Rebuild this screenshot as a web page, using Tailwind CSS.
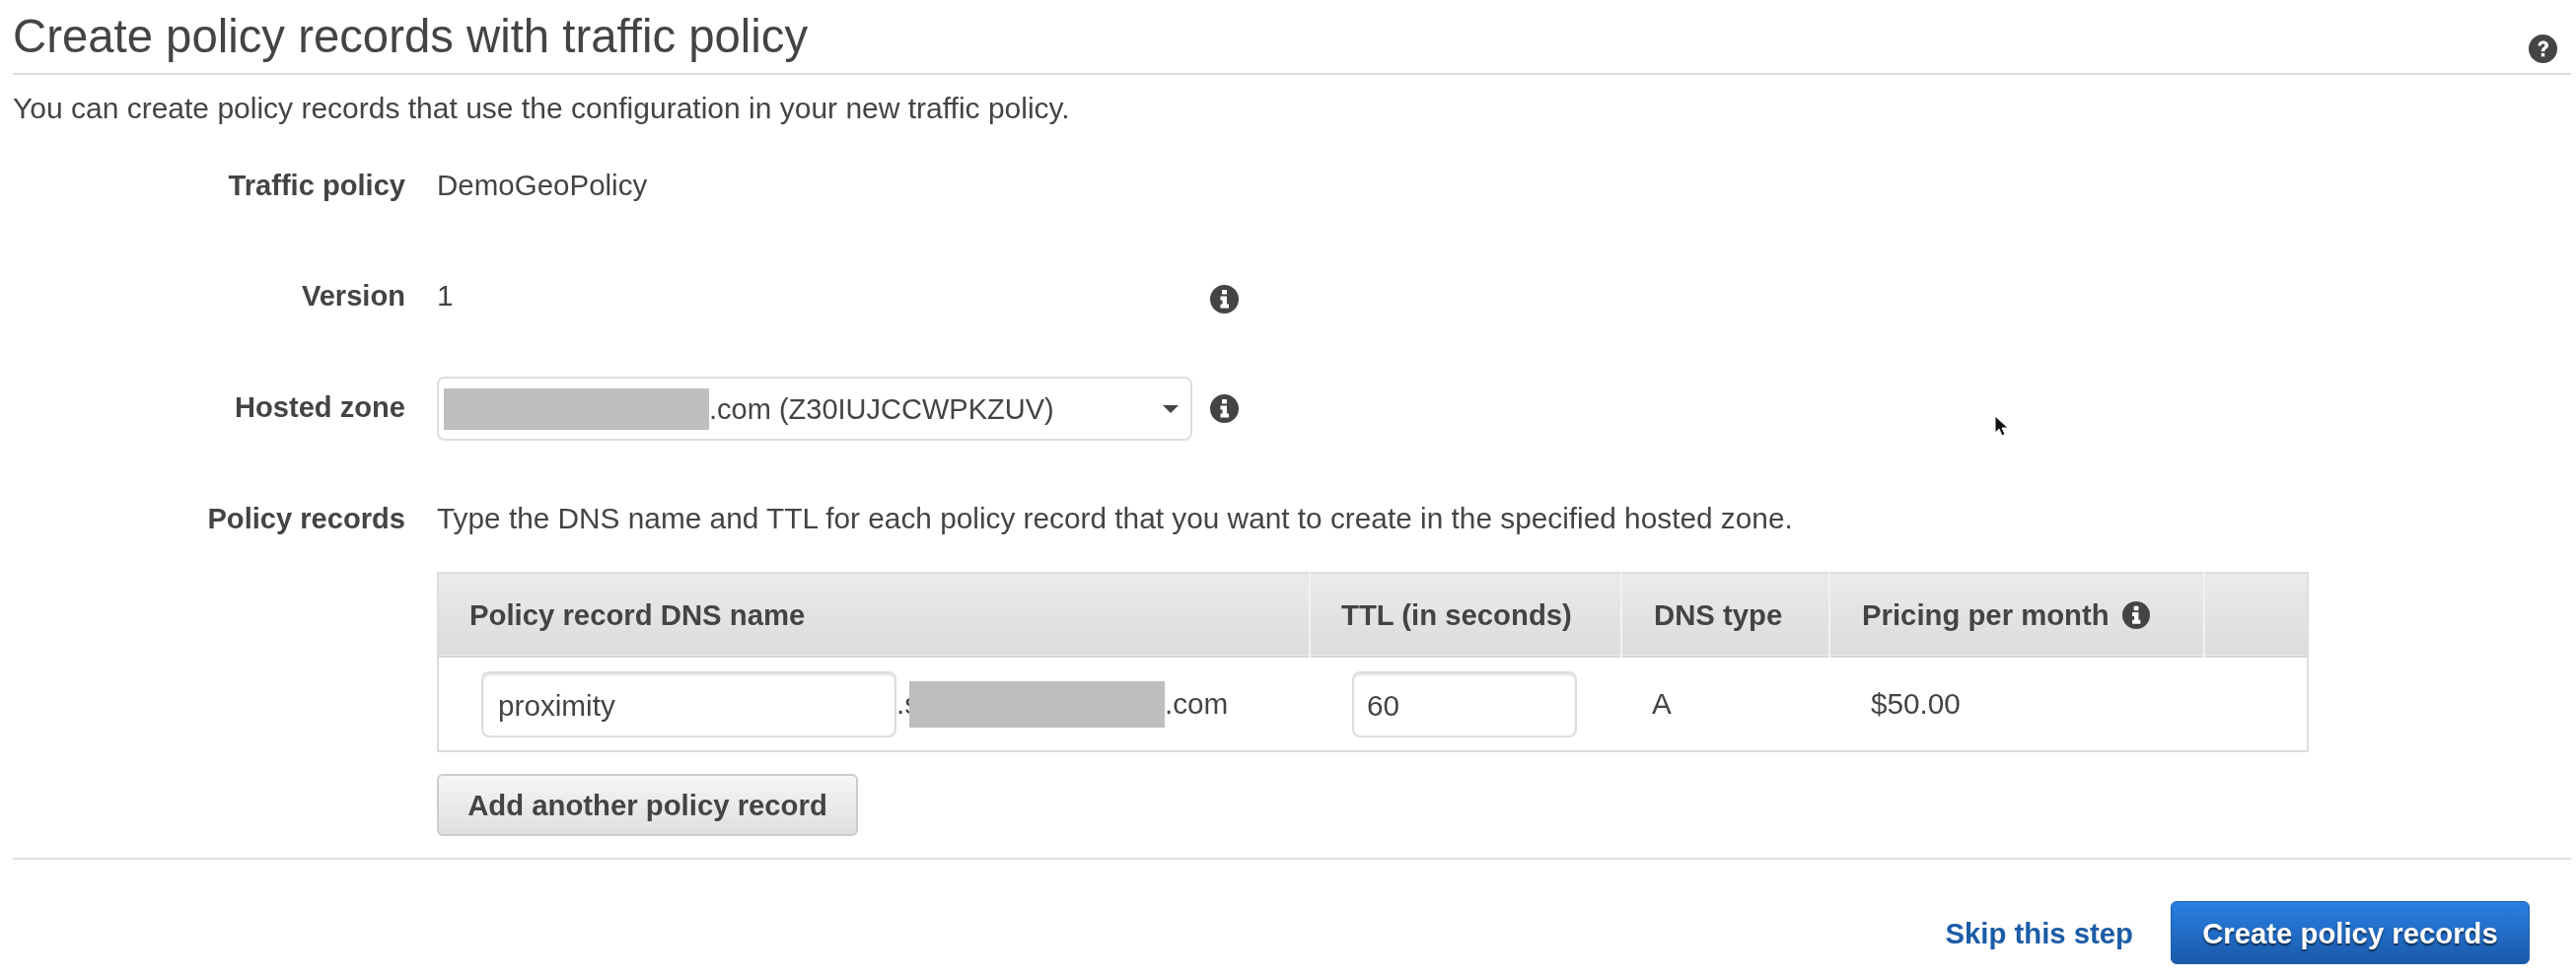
<!DOCTYPE html>
<html lang="en">
<head>
<meta charset="utf-8">
<title>Create policy records with traffic policy</title>
<script src="https://cdn.jsdelivr.net/npm/@tailwindcss/browser@4"></script>
</head>
<body class="bg-white text-[#444] font-['Liberation_Sans',Arial,sans-serif] text-[29.7px] leading-[32px] overflow-hidden">
<div class="relative w-[2612px] h-[992px] pl-[13px] pr-[5px] blur-[0.4px]">

  <!-- header -->
  <div class="flex items-center justify-between h-[76px] border-b-2 border-[#ddd] pr-[14px]">
    <h1 class="text-[47.3px] leading-[76px] font-normal">Create policy records with traffic policy</h1>
    <svg class="w-[29px] h-[29px] mt-[25px] mr-0" viewBox="0 0 29 29">
      <circle cx="14.5" cy="14.5" r="14.5" fill="#444"/>
      <path d="M9.5 11.5c0-3 2.300-5 5.200-5 3 0 5.300 1.800 5.300 4.500 0 3.600-3.800 3.600-3.800 6.200h-3.400c0-4.400 3.600-4.300 3.600-6.200 0-.9-.8-1.500-1.800-1.500-1.100 0-1.900.8-2.100 2z" fill="#fff"/>
      <rect x="12.800" y="19" width="3.400" height="3.400" fill="#fff"/>
    </svg>
  </div>

  <p class="mt-[18px] text-[30px]">You can create policy records that use the configuration in your new traffic policy.</p>

  <!-- Traffic policy -->
  <div class="flex gap-[32px] mt-[46px] h-[32px]">
    <div class="w-[398px] text-right font-bold text-[29.1px]">Traffic policy</div>
    <div class="text-[29.5px]">DemoGeoPolicy</div>
  </div>

  <!-- Version -->
  <div class="flex gap-[32px] mt-[80px] h-[32px] items-center">
    <div class="w-[398px] text-right font-bold text-[29.1px]">Version</div>
    <div class="w-[766px]">1</div>
    <svg class="w-[29px] h-[29px] mt-[6px] -ml-[14px]" viewBox="0 0 29 29">
      <circle cx="14.5" cy="14.5" r="14.5" fill="#444"/>
      <rect x="12" y="5" width="5" height="4.500" rx=".6" fill="#fff"/>
      <path d="M10.500 11.500h6.500v8h2v4h-8.500v-4h2v-4h-2z" fill="#fff"/>
    </svg>
  </div>

  <!-- Hosted zone -->
  <div class="flex gap-[32px] mt-[66px] items-center h-[65px]">
    <div class="w-[398px] text-right font-bold text-[29.1px] -mt-[4px]">Hosted zone</div>
    <div class="flex items-center w-[766px] h-[65px] border-2 border-[#ddd] rounded-[8px] pl-[5px] pr-[12px]">
      <div class="w-[269px] h-[42px] bg-[#bebebe]"></div>
      <span class="text-[29px] pt-[1px]">.com (Z30IUJCCWPKZUV)</span>
      <span class="ml-auto w-0 h-0 border-x-[8px] border-x-transparent border-t-[8px] border-t-[#444]"></span>
    </div>
    <svg class="w-[29px] h-[29px] -ml-[14px]" viewBox="0 0 29 29">
      <circle cx="14.5" cy="14.5" r="14.5" fill="#444"/>
      <rect x="12" y="5" width="5" height="4.500" rx=".6" fill="#fff"/>
      <path d="M10.500 11.500h6.500v8h2v4h-8.500v-4h2v-4h-2z" fill="#fff"/>
    </svg>
  </div>

  <!-- Policy records -->
  <div class="flex gap-[32px] mt-[63px] h-[32px]">
    <div class="w-[398px] text-right font-bold text-[29.1px]">Policy records</div>
    <div class="text-[29.8px]">Type the DNS name and TTL for each policy record that you want to create in the specified hosted zone.</div>
  </div>

  <div class="ml-[430px] mt-[38px] w-[1896px]">
    <table class="w-full table-fixed border-collapse border-2 border-[#ddd]">
      <colgroup>
        <col class="w-[884px]">
        <col class="w-[316px]">
        <col class="w-[211px]">
        <col class="w-[380px]">
        <col class="w-[105px]">
      </colgroup>
      <thead>
        <tr class="h-[85px] bg-gradient-to-b from-[#eaebeb] to-[#dcdcdc] border-b-2 border-[#d8d8d8] text-left text-[29.3px]">
          <th class="pl-[31px] font-bold">Policy record DNS name</th>
          <th class="pl-[31px] font-bold border-l-2 border-[#f2f2f2]">TTL (in seconds)</th>
          <th class="pl-[32px] font-bold border-l-2 border-[#f2f2f2]">DNS type</th>
          <th class="pl-[32px] font-bold border-l-2 border-[#f2f2f2]">
            <span class="inline-flex items-center gap-[13px]">Pricing per month
              <svg class="w-[28px] h-[28px]" viewBox="0 0 29 29">
                <circle cx="14.5" cy="14.5" r="14.5" fill="#444"/>
                <rect x="12" y="5" width="5" height="4.500" rx=".6" fill="#fff"/>
                <path d="M10.500 11.500h6.500v8h2v4h-8.500v-4h2v-4h-2z" fill="#fff"/>
              </svg>
            </span>
          </th>
          <th class="border-l-2 border-[#f2f2f2]"></th>
        </tr>
      </thead>
      <tbody>
        <tr class="h-[96px]">
          <td class="pl-[43px]">
            <div class="flex items-center">
              <input type="text" value="proximity" class="w-[421px] h-[67px] pl-[15px] pt-[3px] bg-white border-2 border-[#ddd] rounded-[8px] shadow-[inset_0_2px_2px_#e4e4e4] outline-none">
              <span class="w-[13px] whitespace-nowrap">.s</span>
              <span class="relative w-[259px] h-[47px] bg-[#bebebe]"></span>
              <span>.com</span>
            </div>
          </td>
          <td class="pl-[43px]">
            <input type="text" value="60" class="block w-[228px] h-[67px] pl-[13px] pt-[3px] bg-white border-2 border-[#ddd] rounded-[8px] shadow-[inset_0_2px_2px_#e4e4e4] outline-none">
          </td>
          <td class="pl-[31px]">A</td>
          <td class="pl-[42px]">$50.00</td>
          <td></td>
        </tr>
      </tbody>
    </table>

    <button class="block mt-[22px] w-[427px] h-[63px] rounded-[6px] border-2 border-[#ccc] bg-gradient-to-b from-[#f6f6f6] to-[#dfdfdf] text-[#444] font-bold text-[29.3px]">Add another policy record</button>
  </div>

  <!-- footer -->
  <div class="mt-[22px] border-t-2 border-[#ddd] flex items-center justify-end pt-[42px] pr-[42px] gap-[38px]">
    <a class="text-[#1b5ca6] font-bold text-[29.3px] pt-[2px]">Skip this step</a>
    <button class="w-[364px] h-[64px] pt-[2px] rounded-[6px] border border-[#1a5fa8] bg-gradient-to-b from-[#2a7fe4] to-[#1a5aaa] text-white font-bold text-[29.3px] [text-shadow:0_2px_2px_rgba(0,0,0,0.6)]">Create policy records</button>
  </div>

  <!-- mouse pointer -->
  <svg class="absolute left-[2020px] top-[420px] w-[18px] h-[26px]" viewBox="0 0 18 26">
    <path d="M3 2v17l4-4 3 7 3-1.500-3-6.500h6z" fill="#111" stroke="#fff" stroke-width="1"/>
  </svg>
</div>
</body>
</html>
